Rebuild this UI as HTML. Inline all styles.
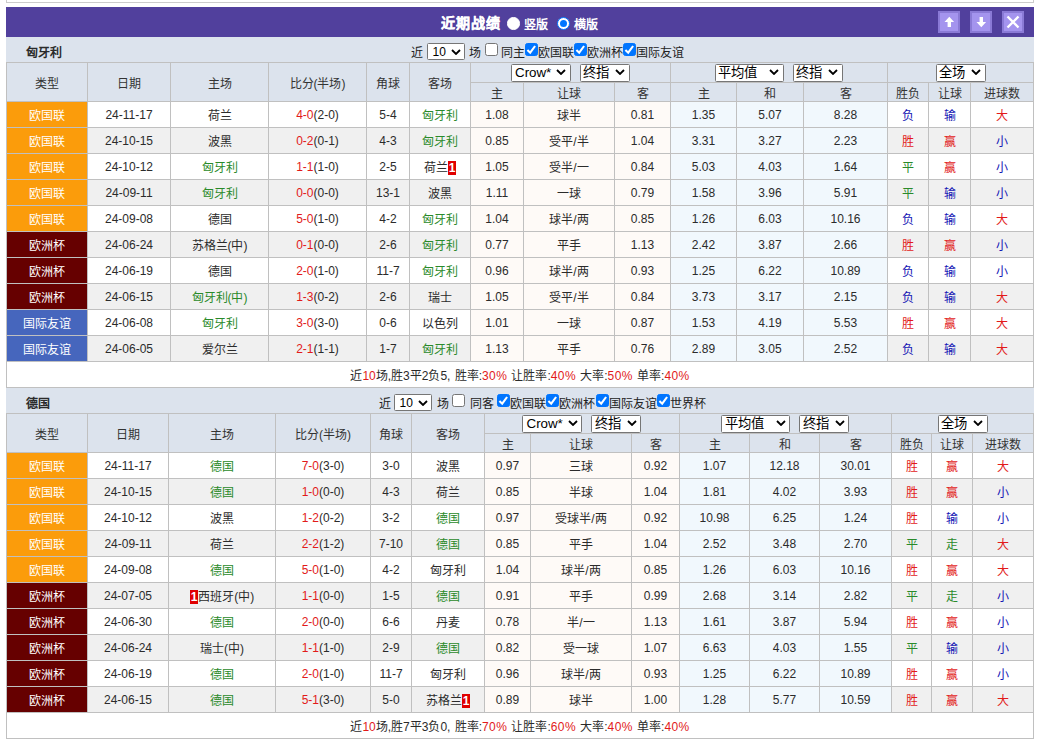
<!DOCTYPE html>
<html lang="zh-CN"><head><meta charset="utf-8"><title>近期战绩</title>
<style>
html,body{margin:0;padding:0;background:#fff;}
body{width:1038px;height:741px;position:relative;overflow:hidden;font-family:"Liberation Sans",sans-serif;font-size:12px;color:#2b2b2b;}
.topbox{position:absolute;left:6px;top:-10px;width:1026px;height:11px;border:1px solid #ccc;background:#fff;}
.bar{position:absolute;left:6px;top:7px;width:1028px;height:30px;background:#51409d;color:#fff;}
.bar .ttl{position:absolute;left:435.3px;top:6.3px;font-size:14px;letter-spacing:1px;font-weight:bold;line-height:20px;white-space:nowrap;-webkit-text-stroke:0.3px #fff;}
.bar .opt{position:absolute;top:9.5px;font-size:12px;font-weight:bold;line-height:16px;white-space:nowrap;}
.rd{position:absolute;top:10.25px;width:10.5px;height:10.5px;border-radius:50%;background:#fff;border:1px solid #fff;box-sizing:content-box;}
.rd.on{border:1px solid #0075ff;background:#fff;width:11px;height:11px;top:10px;}
.rd.on:after{content:"";position:absolute;left:2px;top:2px;width:7px;height:7px;border-radius:50%;background:#0075ff;}
.btn{position:absolute;top:4px;width:18px;height:18px;background:#a494ee;border:2px solid #8a7ad6;}
.btn svg{position:absolute;left:0;top:0;width:18px;height:18px;}
.sec{position:absolute;left:6px;width:1028px;height:25px;background:#dce3ed;}
.sec b{position:absolute;left:20px;top:8px;line-height:16px;font-size:12px;}
.flt{position:absolute;top:0;height:25px;line-height:27px;white-space:nowrap;font-size:12px;color:#222;}
.flt > *{vertical-align:middle;}
.cb{position:absolute;top:6px;width:11px;height:11px;border:1px solid #767676;border-radius:2.5px;background:#fff;}
.ft{position:absolute;top:7.5px;line-height:16px;font-size:12px;white-space:nowrap;color:#222;}
.sel.s10{position:absolute;top:6px;width:38px;height:17px;font-size:12px;line-height:16px;padding-left:4.5px;}
.cb.on{background:#0075ff;border-color:#0075ff;}
.cb svg{position:absolute;left:-1px;top:-1px;width:13px;height:13px;}
.sel{display:inline-block;box-sizing:border-box;height:18px;border:1px solid #767676;border-radius:1.5px;background:#fff;color:#000;font-size:13.33px;line-height:16px;text-align:left;padding-left:2.5px;position:relative;left:-0.5px;vertical-align:middle;font-weight:normal;}
.sel svg{position:absolute;right:3.5px;top:4.5px;width:10px;height:6px;}
table{position:absolute;left:6px;border-collapse:collapse;table-layout:fixed;width:1027px;}
td,th{border:1px solid #c0c0c0;text-align:center;padding:0;font-weight:normal;font-size:12px;overflow:hidden;white-space:nowrap;}
tr{height:26px;background:#fff;}
tr.alt{background:#f0f0f0;}
tr.h1{height:20px;background:#dce3ed;}
tr.h2{height:19px;background:#dce3ed;}
th{color:#333;}
.ta{background:#fb9c0b;color:#fff;}
.tb{background:#660000;color:#fff;}
.tc{background:#4666bd;color:#fff;}
.w{background:#fefaf7;}
.c{background:#f1f8fd;}
.r{color:#e21a1a;}
.b{color:#1414b4;}
.g{color:#2a8a2a;}
.rc{font-style:normal;background:#e00000;color:#fff;font-weight:bold;padding:0 1px;}
tr.sum{background:#fff;}
tr.sum td{word-spacing:0.9px;}
.p{letter-spacing:0.4px;}
</style></head><body>
<div class="topbox"></div>
<div class="bar"><span class="ttl">近期战绩</span>
<i class="rd" style="left:501px"></i><span class="opt" style="left:518px">竖版</span>
<i class="rd on" style="left:551px"></i><span class="opt" style="left:568px">横版</span>
<div class="btn" style="left:932px"><svg viewBox="0 0 18 18"><path d="M9.3 3.8 L4.5 9 H7.6 V14 H11 V9 H14.1 Z" fill="#fff"/></svg></div>
<div class="btn" style="left:964px"><svg viewBox="0 0 18 18"><path d="M9.3 14.2 L4.5 9 H7.6 V4 H11 V9 H14.1 Z" fill="#fff"/></svg></div>
<div class="btn" style="left:996px"><svg viewBox="0 0 18 18"><path d="M3.5 3.5 L14.5 14.5 M14.5 3.5 L3.5 14.5" stroke="#fff" stroke-width="2.4" fill="none"/></svg></div>
</div>
<div class="sec" style="top:37px"><b>匈牙利</b>
<span class="ft" style="left:405px">近</span><span class="sel s10" style="left:421px">10<svg viewBox="0 0 10 6"><path d="M1 1 L5 5 L9 1" fill="none" stroke="#000" stroke-width="1.8"/></svg></span><span class="ft" style="left:463.3px">场</span><i class="cb" style="left:479px"></i><span class="ft" style="left:495.2px">同主</span><i class="cb on" style="left:519px"><svg viewBox="0 0 13 13"><path d="M2.4 7 L5.2 9.7 L10.1 3" fill="none" stroke="#fff" stroke-width="2.1"/></svg></i><span class="ft" style="left:532px">欧国联</span><i class="cb on" style="left:568px"><svg viewBox="0 0 13 13"><path d="M2.4 7 L5.2 9.7 L10.1 3" fill="none" stroke="#fff" stroke-width="2.1"/></svg></i><span class="ft" style="left:581px">欧洲杯</span><i class="cb on" style="left:617px"><svg viewBox="0 0 13 13"><path d="M2.4 7 L5.2 9.7 L10.1 3" fill="none" stroke="#fff" stroke-width="2.1"/></svg></i><span class="ft" style="left:630px">国际友谊</span></div>
<table style="top:62px"><colgroup><col style="width:81px"><col style="width:83px"><col style="width:98px"><col style="width:98px"><col style="width:43px"><col style="width:61px"><col style="width:53px"><col style="width:91px"><col style="width:56px"><col style="width:66px"><col style="width:67px"><col style="width:84px"><col style="width:41px"><col style="width:42px"><col style="width:63px"></colgroup>
<tr class="h1"><th rowspan="2">类型</th><th rowspan="2">日期</th><th rowspan="2">主场</th><th rowspan="2">比分(半场)</th><th rowspan="2">角球</th><th rowspan="2">客场</th><th colspan="3"><span class="sel" style="width:60px;margin-left:0px;padding-left:3.5px;">Crow*<svg viewBox="0 0 10 6"><path d="M1 1 L5 5 L9 1" fill="none" stroke="#000" stroke-width="1.8"/></svg></span><span class="sel" style="width:50px;margin-left:9px;">终指<svg viewBox="0 0 10 6"><path d="M1 1 L5 5 L9 1" fill="none" stroke="#000" stroke-width="1.8"/></svg></span></th><th colspan="3"><span class="sel" style="width:69px;margin-left:0px;">平均值<svg viewBox="0 0 10 6"><path d="M1 1 L5 5 L9 1" fill="none" stroke="#000" stroke-width="1.8"/></svg></span><span class="sel" style="width:50px;margin-left:9px;">终指<svg viewBox="0 0 10 6"><path d="M1 1 L5 5 L9 1" fill="none" stroke="#000" stroke-width="1.8"/></svg></span></th><th colspan="3"><span class="sel" style="width:50px;margin-left:0px;left:0;">全场<svg viewBox="0 0 10 6"><path d="M1 1 L5 5 L9 1" fill="none" stroke="#000" stroke-width="1.8"/></svg></span></th></tr><tr class="h2"><th>主</th><th>让球</th><th>客</th><th>主</th><th>和</th><th>客</th><th>胜负</th><th>让球</th><th>进球数</th></tr>
<tr><td class="ta">欧国联</td><td>24-11-17</td><td>荷兰</td><td><span class="r">4-0</span>(2-0)</td><td>5-4</td><td><span class="g">匈牙利</span></td><td class="w">1.08</td><td class="w">球半</td><td class="w">0.81</td><td class="c">1.35</td><td class="c">5.07</td><td class="c">8.28</td><td class="b">负</td><td class="b">输</td><td class="r">大</td></tr>
<tr class="alt"><td class="ta">欧国联</td><td>24-10-15</td><td>波黑</td><td><span class="r">0-2</span>(0-1)</td><td>4-3</td><td><span class="g">匈牙利</span></td><td class="w">0.85</td><td class="w">受平/半</td><td class="w">1.04</td><td class="c">3.31</td><td class="c">3.27</td><td class="c">2.23</td><td class="r">胜</td><td class="r">赢</td><td class="b">小</td></tr>
<tr><td class="ta">欧国联</td><td>24-10-12</td><td><span class="g">匈牙利</span></td><td><span class="r">1-1</span>(1-0)</td><td>2-5</td><td>荷兰<i class="rc">1</i></td><td class="w">1.05</td><td class="w">受半/一</td><td class="w">0.84</td><td class="c">5.03</td><td class="c">4.03</td><td class="c">1.64</td><td class="g">平</td><td class="r">赢</td><td class="b">小</td></tr>
<tr class="alt"><td class="ta">欧国联</td><td>24-09-11</td><td><span class="g">匈牙利</span></td><td><span class="r">0-0</span>(0-0)</td><td>13-1</td><td>波黑</td><td class="w">1.11</td><td class="w">一球</td><td class="w">0.79</td><td class="c">1.58</td><td class="c">3.96</td><td class="c">5.91</td><td class="g">平</td><td class="b">输</td><td class="b">小</td></tr>
<tr><td class="ta">欧国联</td><td>24-09-08</td><td>德国</td><td><span class="r">5-0</span>(1-0)</td><td>4-2</td><td><span class="g">匈牙利</span></td><td class="w">1.04</td><td class="w">球半/两</td><td class="w">0.85</td><td class="c">1.26</td><td class="c">6.03</td><td class="c">10.16</td><td class="b">负</td><td class="b">输</td><td class="r">大</td></tr>
<tr class="alt"><td class="tb">欧洲杯</td><td>24-06-24</td><td>苏格兰(中)</td><td><span class="r">0-1</span>(0-0)</td><td>2-6</td><td><span class="g">匈牙利</span></td><td class="w">0.77</td><td class="w">平手</td><td class="w">1.13</td><td class="c">2.42</td><td class="c">3.87</td><td class="c">2.66</td><td class="r">胜</td><td class="r">赢</td><td class="b">小</td></tr>
<tr><td class="tb">欧洲杯</td><td>24-06-19</td><td>德国</td><td><span class="r">2-0</span>(1-0)</td><td>11-7</td><td><span class="g">匈牙利</span></td><td class="w">0.96</td><td class="w">球半/两</td><td class="w">0.93</td><td class="c">1.25</td><td class="c">6.22</td><td class="c">10.89</td><td class="b">负</td><td class="b">输</td><td class="b">小</td></tr>
<tr class="alt"><td class="tb">欧洲杯</td><td>24-06-15</td><td><span class="g">匈牙利(中)</span></td><td><span class="r">1-3</span>(0-2)</td><td>2-6</td><td>瑞士</td><td class="w">1.05</td><td class="w">受平/半</td><td class="w">0.84</td><td class="c">3.73</td><td class="c">3.17</td><td class="c">2.15</td><td class="b">负</td><td class="b">输</td><td class="r">大</td></tr>
<tr><td class="tc">国际友谊</td><td>24-06-08</td><td><span class="g">匈牙利</span></td><td><span class="r">3-0</span>(3-0)</td><td>0-6</td><td>以色列</td><td class="w">1.01</td><td class="w">一球</td><td class="w">0.87</td><td class="c">1.53</td><td class="c">4.19</td><td class="c">5.53</td><td class="r">胜</td><td class="r">赢</td><td class="r">大</td></tr>
<tr class="alt"><td class="tc">国际友谊</td><td>24-06-05</td><td>爱尔兰</td><td><span class="r">2-1</span>(1-1)</td><td>1-7</td><td><span class="g">匈牙利</span></td><td class="w">1.13</td><td class="w">平手</td><td class="w">0.76</td><td class="c">2.89</td><td class="c">3.05</td><td class="c">2.52</td><td class="b">负</td><td class="b">输</td><td class="r">大</td></tr>
<tr class="sum"><td colspan="15">近<span class="r">10</span>场,胜3平2负5, 胜率:<span class="r p">30%</span> 让胜率:<span class="r p">40%</span> 大率:<span class="r p">50%</span> 单率:<span class="r p">40%</span></td></tr>
</table>
<div class="sec" style="top:388px"><b>德国</b>
<span class="ft" style="left:372.5px">近</span><span class="sel s10" style="left:388px">10<svg viewBox="0 0 10 6"><path d="M1 1 L5 5 L9 1" fill="none" stroke="#000" stroke-width="1.8"/></svg></span><span class="ft" style="left:430.7px">场</span><i class="cb" style="left:446px"></i><span class="ft" style="left:463.5px">同客</span><i class="cb on" style="left:491.3px"><svg viewBox="0 0 13 13"><path d="M2.4 7 L5.2 9.7 L10.1 3" fill="none" stroke="#fff" stroke-width="2.1"/></svg></i><span class="ft" style="left:504.3px">欧国联</span><i class="cb on" style="left:540.3px"><svg viewBox="0 0 13 13"><path d="M2.4 7 L5.2 9.7 L10.1 3" fill="none" stroke="#fff" stroke-width="2.1"/></svg></i><span class="ft" style="left:553.3px">欧洲杯</span><i class="cb on" style="left:589.5px"><svg viewBox="0 0 13 13"><path d="M2.4 7 L5.2 9.7 L10.1 3" fill="none" stroke="#fff" stroke-width="2.1"/></svg></i><span class="ft" style="left:602.5px">国际友谊</span><i class="cb on" style="left:650.5px"><svg viewBox="0 0 13 13"><path d="M2.4 7 L5.2 9.7 L10.1 3" fill="none" stroke="#fff" stroke-width="2.1"/></svg></i><span class="ft" style="left:663.5px">世界杯</span></div>
<table style="top:413px"><colgroup><col style="width:81px"><col style="width:81px"><col style="width:107px"><col style="width:95px"><col style="width:41px"><col style="width:73px"><col style="width:46px"><col style="width:101px"><col style="width:48px"><col style="width:70px"><col style="width:70px"><col style="width:72px"><col style="width:40px"><col style="width:41px"><col style="width:61px"></colgroup>
<tr class="h1"><th rowspan="2">类型</th><th rowspan="2">日期</th><th rowspan="2">主场</th><th rowspan="2">比分(半场)</th><th rowspan="2">角球</th><th rowspan="2">客场</th><th colspan="3"><span class="sel" style="width:60px;margin-left:0px;padding-left:3.5px;">Crow*<svg viewBox="0 0 10 6"><path d="M1 1 L5 5 L9 1" fill="none" stroke="#000" stroke-width="1.8"/></svg></span><span class="sel" style="width:50px;margin-left:9px;">终指<svg viewBox="0 0 10 6"><path d="M1 1 L5 5 L9 1" fill="none" stroke="#000" stroke-width="1.8"/></svg></span></th><th colspan="3"><span class="sel" style="width:69px;margin-left:0px;">平均值<svg viewBox="0 0 10 6"><path d="M1 1 L5 5 L9 1" fill="none" stroke="#000" stroke-width="1.8"/></svg></span><span class="sel" style="width:50px;margin-left:9px;">终指<svg viewBox="0 0 10 6"><path d="M1 1 L5 5 L9 1" fill="none" stroke="#000" stroke-width="1.8"/></svg></span></th><th colspan="3"><span class="sel" style="width:50px;margin-left:0px;left:0;">全场<svg viewBox="0 0 10 6"><path d="M1 1 L5 5 L9 1" fill="none" stroke="#000" stroke-width="1.8"/></svg></span></th></tr><tr class="h2"><th>主</th><th>让球</th><th>客</th><th>主</th><th>和</th><th>客</th><th>胜负</th><th>让球</th><th>进球数</th></tr>
<tr><td class="ta">欧国联</td><td>24-11-17</td><td><span class="g">德国</span></td><td><span class="r">7-0</span>(3-0)</td><td>3-0</td><td>波黑</td><td class="w">0.97</td><td class="w">三球</td><td class="w">0.92</td><td class="c">1.07</td><td class="c">12.18</td><td class="c">30.01</td><td class="r">胜</td><td class="r">赢</td><td class="r">大</td></tr>
<tr class="alt"><td class="ta">欧国联</td><td>24-10-15</td><td><span class="g">德国</span></td><td><span class="r">1-0</span>(0-0)</td><td>4-3</td><td>荷兰</td><td class="w">0.85</td><td class="w">半球</td><td class="w">1.04</td><td class="c">1.81</td><td class="c">4.02</td><td class="c">3.93</td><td class="r">胜</td><td class="r">赢</td><td class="b">小</td></tr>
<tr><td class="ta">欧国联</td><td>24-10-12</td><td>波黑</td><td><span class="r">1-2</span>(0-2)</td><td>3-2</td><td><span class="g">德国</span></td><td class="w">0.97</td><td class="w">受球半/两</td><td class="w">0.92</td><td class="c">10.98</td><td class="c">6.25</td><td class="c">1.24</td><td class="r">胜</td><td class="b">输</td><td class="b">小</td></tr>
<tr class="alt"><td class="ta">欧国联</td><td>24-09-11</td><td>荷兰</td><td><span class="r">2-2</span>(1-2)</td><td>7-10</td><td><span class="g">德国</span></td><td class="w">0.85</td><td class="w">平手</td><td class="w">1.04</td><td class="c">2.52</td><td class="c">3.48</td><td class="c">2.70</td><td class="g">平</td><td class="g">走</td><td class="r">大</td></tr>
<tr><td class="ta">欧国联</td><td>24-09-08</td><td><span class="g">德国</span></td><td><span class="r">5-0</span>(1-0)</td><td>4-2</td><td>匈牙利</td><td class="w">1.04</td><td class="w">球半/两</td><td class="w">0.85</td><td class="c">1.26</td><td class="c">6.03</td><td class="c">10.16</td><td class="r">胜</td><td class="r">赢</td><td class="r">大</td></tr>
<tr class="alt"><td class="tb">欧洲杯</td><td>24-07-05</td><td><i class="rc">1</i>西班牙(中)</td><td><span class="r">1-1</span>(0-0)</td><td>1-5</td><td><span class="g">德国</span></td><td class="w">0.91</td><td class="w">平手</td><td class="w">0.99</td><td class="c">2.68</td><td class="c">3.14</td><td class="c">2.82</td><td class="g">平</td><td class="g">走</td><td class="b">小</td></tr>
<tr><td class="tb">欧洲杯</td><td>24-06-30</td><td><span class="g">德国</span></td><td><span class="r">2-0</span>(0-0)</td><td>6-6</td><td>丹麦</td><td class="w">0.78</td><td class="w">半/一</td><td class="w">1.13</td><td class="c">1.61</td><td class="c">3.87</td><td class="c">5.94</td><td class="r">胜</td><td class="r">赢</td><td class="b">小</td></tr>
<tr class="alt"><td class="tb">欧洲杯</td><td>24-06-24</td><td>瑞士(中)</td><td><span class="r">1-1</span>(1-0)</td><td>2-9</td><td><span class="g">德国</span></td><td class="w">0.82</td><td class="w">受一球</td><td class="w">1.07</td><td class="c">6.63</td><td class="c">4.03</td><td class="c">1.55</td><td class="g">平</td><td class="b">输</td><td class="b">小</td></tr>
<tr><td class="tb">欧洲杯</td><td>24-06-19</td><td><span class="g">德国</span></td><td><span class="r">2-0</span>(1-0)</td><td>11-7</td><td>匈牙利</td><td class="w">0.96</td><td class="w">球半/两</td><td class="w">0.93</td><td class="c">1.25</td><td class="c">6.22</td><td class="c">10.89</td><td class="r">胜</td><td class="r">赢</td><td class="b">小</td></tr>
<tr class="alt"><td class="tb">欧洲杯</td><td>24-06-15</td><td><span class="g">德国</span></td><td><span class="r">5-1</span>(3-0)</td><td>5-0</td><td>苏格兰<i class="rc">1</i></td><td class="w">0.89</td><td class="w">球半</td><td class="w">1.00</td><td class="c">1.28</td><td class="c">5.77</td><td class="c">10.59</td><td class="r">胜</td><td class="r">赢</td><td class="r">大</td></tr>
<tr class="sum"><td colspan="15">近<span class="r">10</span>场,胜7平3负0, 胜率:<span class="r p">70%</span> 让胜率:<span class="r p">60%</span> 大率:<span class="r p">40%</span> 单率:<span class="r p">40%</span></td></tr>
</table>
</body></html>
